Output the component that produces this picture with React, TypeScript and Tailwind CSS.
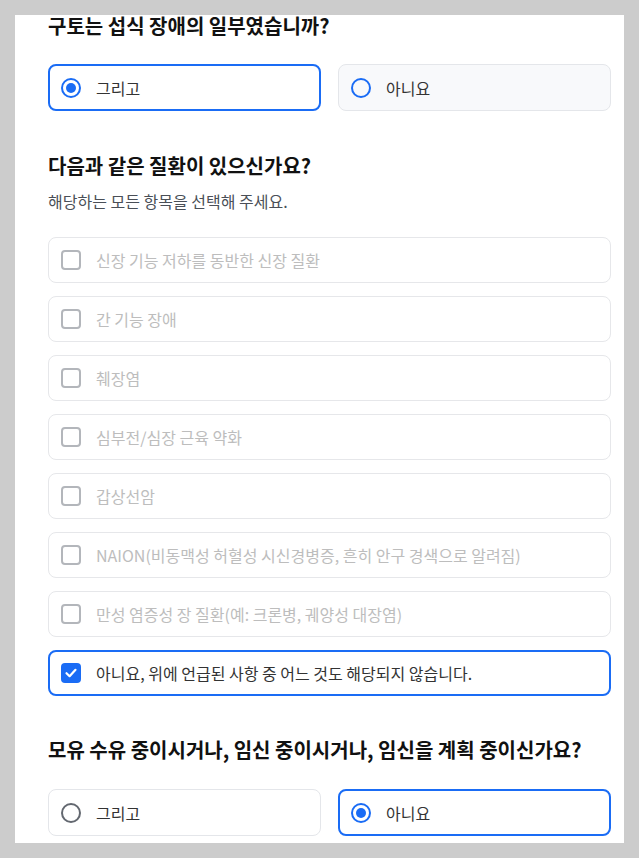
import React from "react";

function Radio({ checked, tone }: { checked: boolean; tone: "blue" | "gray" }) {
  if (checked) {
    return (
      <span className="flex h-5 w-5 shrink-0 items-center justify-center rounded-full border-2 border-[#1a6cf5]">
        <span className="h-[10px] w-[10px] rounded-full bg-[#1a6cf5]" />
      </span>
    );
  }
  return (
    <span
      className={
        tone === "blue"
          ? "h-5 w-5 shrink-0 rounded-full border-2 border-[#1a6cf5]"
          : "h-5 w-5 shrink-0 rounded-full border-2 border-[#636870]"
      }
    />
  );
}

function RadioBox({
  label,
  checked,
  variant,
}: {
  label: string;
  checked?: boolean;
  variant: "selected" | "hover" | "plain";
}) {
  const cls =
    variant === "selected"
      ? "border-2 border-[#1a6cf5] bg-white px-[11px]"
      : variant === "hover"
      ? "border border-[#e4e6ea] bg-[#f8f9fb] px-[12px]"
      : "border border-[#e4e6ea] bg-white px-[12px]";
  return (
    <div className={`flex h-[47px] items-center gap-[15px] rounded-[8px] ${cls}`}>
      <Radio checked={!!checked} tone={variant === "hover" ? "blue" : "gray"} />
      <span className="text-[16px] leading-[22px] text-[#333333]">{label}</span>
    </div>
  );
}

function CheckRow({ label, checked }: { label: string; checked?: boolean }) {
  if (checked) {
    return (
      <div className="flex h-[46px] items-center gap-[15px] rounded-[8px] border-2 border-[#1a6cf5] bg-white px-[11px]">
        <span className="flex h-5 w-5 shrink-0 items-center justify-center rounded-[4px] bg-[#1a6cf5]">
          <svg width="14" height="14" viewBox="0 0 14 14" fill="none">
            <path
              d="M2.5 7.2 L5.6 10.2 L11.5 3.8"
              stroke="white"
              strokeWidth="2.2"
              strokeLinecap="round"
              strokeLinejoin="round"
            />
          </svg>
        </span>
        <span className="text-[16px] leading-[22px] text-[#333333]">{label}</span>
      </div>
    );
  }
  return (
    <div className="flex h-[46px] items-center gap-[15px] rounded-[8px] border border-[#e6e7ea] bg-white px-[12px]">
      <span className="h-5 w-5 shrink-0 rounded-[4px] border-2 border-[#b3b6bb]" />
      <span className="text-[16px] leading-[22px] text-[#bdbdbd]">{label}</span>
    </div>
  );
}

const conditions = [
  "신장 기능 저하를 동반한 신장 질환",
  "간 기능 장애",
  "췌장염",
  "심부전/심장 근육 약화",
  "갑상선암",
  "NAION(비동맥성 허혈성 시신경병증, 흔히 안구 경색으로 알려짐)",
  "만성 염증성 장 질환(예: 크론병, 궤양성 대장염)",
];

export default function App() {
  return (
    <div
      className="h-[858px] w-[639px] bg-[#cccccc] p-[15px]"
      style={{ fontFamily: '"Noto Sans CJK KR", "Noto Sans", sans-serif' }}
    >
      <div className="h-[828px] w-[609px] overflow-hidden bg-white pl-[33px] pr-[13px]">
        <h2 className="text-[20px] font-bold leading-[22px] text-[#111111]">
          구토는 섭식 장애의 일부였습니까?
        </h2>
        <div className="mt-[27px] grid grid-cols-2 gap-[17px]">
          <RadioBox label="그리고" checked variant="selected" />
          <RadioBox label="아니요" variant="hover" />
        </div>

        <h2 className="mt-[43px] text-[20px] font-bold leading-[24px] text-[#111111]">
          다음과 같은 질환이 있으신가요?
        </h2>
        <p className="mt-[12px] text-[16px] leading-[22px] text-[#4a4f57]">
          해당하는 모든 항목을 선택해 주세요.
        </p>
        <div className="mt-[25px] flex flex-col gap-[13px]">
          {conditions.map((c) => (
            <CheckRow key={c} label={c} />
          ))}
          <CheckRow label="아니요, 위에 언급된 사항 중 어느 것도 해당되지 않습니다." checked />
        </div>

        <h2 className="mt-[42px] text-[20px] font-bold leading-[24px] text-[#111111]">
          모유 수유 중이시거나, 임신 중이시거나, 임신을 계획 중이신가요?
        </h2>
        <div className="mt-[27px] grid grid-cols-2 gap-[17px]">
          <RadioBox label="그리고" variant="plain" />
          <RadioBox label="아니요" checked variant="selected" />
        </div>
      </div>
    </div>
  );
}
